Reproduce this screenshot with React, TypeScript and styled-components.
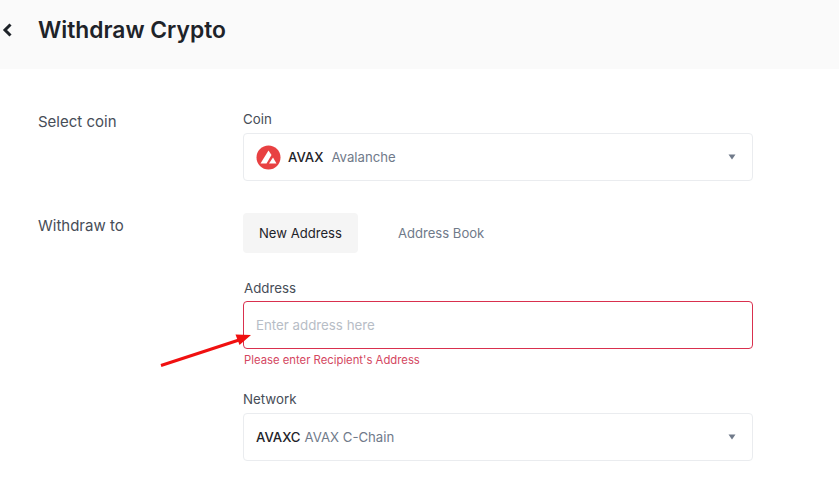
import styled, { createGlobalStyle } from "styled-components";

const GlobalStyle = createGlobalStyle`
  html, body {
    margin: 0;
    padding: 0;
    background: #fff;
    font-family: "Inter", "Liberation Sans", sans-serif;
    overflow: hidden;
  }
`;

const Page = styled.div`
  position: relative;
  width: 839px;
  height: 482px;
  overflow: hidden;
`;

const Header = styled.header`
  display: flex;
  align-items: center;
  height: 69px;
  padding-bottom: 10px;
  box-sizing: border-box;
  background: #fafafa;
`;

const BackButton = styled.button`
  display: flex;
  width: 38px;
  padding: 0 0 0 1px;
  border: 0;
  background: none;
`;

const Title = styled.h1`
  margin: 0;
  font-size: 22.8px;
  line-height: 30px;
  font-weight: 600;
  color: #1e2329;
`;

const Main = styled.main`
  display: flex;
  flex-direction: column;
  gap: 32px;
  padding: 41px 0 0 38px;
`;

const Section = styled.section`
  display: grid;
  grid-template-columns: 205px 510px;
`;

const SectionLabel = styled.div<{ $top: number }>`
  padding-top: ${(p) => p.$top}px;
  font-size: 15px;
  line-height: 22px;
  color: #474d57;
`;

const Field = styled.div`
  display: flex;
  flex-direction: column;
`;

const FieldLabel = styled.label`
  margin-bottom: 4px;
  font-size: 13.3px;
  line-height: 19px;
  color: #474d57;
`;

const Select = styled.div`
  display: flex;
  align-items: center;
  height: 48px;
  padding: 0 16px 0 12px;
  box-sizing: border-box;
  border: 1px solid #eaecef;
  border-radius: 4px;
  font-size: 13.2px;
`;

const CoinLogo = styled.svg`
  margin-right: 7px;
`;

const Symbol = styled.span`
  margin-right: 8px;
  font-weight: 500;
  color: #1e2329;
`;

const NetworkSymbol = styled(Symbol)`
  margin-right: 4px;
`;

const Muted = styled.span`
  color: #707a8a;
`;

const Caret = styled.svg`
  margin-left: auto;
`;

const Tabs = styled.div`
  display: flex;
  align-items: center;
  gap: 40px;
  margin-bottom: 26px;
`;

const Tab = styled.div<{ $active?: boolean }>`
  display: flex;
  align-items: center;
  height: 40px;
  padding: ${(p) => (p.$active ? "0 16px" : "0")};
  border-radius: 4px;
  background: ${(p) => (p.$active ? "#f5f5f5" : "transparent")};
  font-size: 13.1px;
  color: ${(p) => (p.$active ? "#1e2329" : "#707a8a")};
`;

const AddressLabel = styled(FieldLabel)`
  margin-left: 1px;
  margin-bottom: 3px;
`;

const AddressInput = styled.input`
  height: 48px;
  padding: 0 12px;
  box-sizing: border-box;
  border: 1px solid #d9304e;
  border-radius: 4px;
  outline: none;
  font: inherit;
  font-size: 13.3px;

  &::placeholder {
    color: #b7bdc6;
    opacity: 1;
  }
`;

const ErrorText = styled.div`
  margin: 3px 0 22px 1px;
  font-size: 11.3px;
  line-height: 16px;
  color: #d4475f;
`;

const Arrow = styled.svg`
  position: absolute;
  left: 155px;
  top: 328px;
`;

function ChevronDown() {
  return (
    <Caret width="8" height="6" viewBox="0 0 8 6">
      <path d="M0.5 0.5h7L4 5.5z" fill="#707a8a" />
    </Caret>
  );
}

export default function App() {
  return (
    <Page>
      <GlobalStyle />
      <Header>
        <BackButton aria-label="Back">
          <svg width="12" height="16" viewBox="0 0 12 16">
            <path d="M9.5 2.5 4 8l5.5 5.5" fill="none" stroke="#1e2329" strokeWidth="3" />
          </svg>
        </BackButton>
        <Title>Withdraw Crypto</Title>
      </Header>
      <Main>
        <Section>
          <SectionLabel $top={1}>Select coin</SectionLabel>
          <Field>
            <FieldLabel>Coin</FieldLabel>
            <Select>
              <CoinLogo width="25" height="25" viewBox="0 0 25 25">
                <circle cx="12.5" cy="12.5" r="12" fill="#e84142" />
                <path d="M12.5 5.5 15.5 10 10.5 18.5H4.5z" fill="#fff" />
                <path d="M17 12.5 13 18.5H20.5z" fill="#fff" />
              </CoinLogo>
              <Symbol>AVAX</Symbol>
              <Muted>Avalanche</Muted>
              <ChevronDown />
            </Select>
          </Field>
        </Section>
        <Section>
          <SectionLabel $top={2}>Withdraw to</SectionLabel>
          <Field>
            <Tabs>
              <Tab $active>New Address</Tab>
              <Tab>Address Book</Tab>
            </Tabs>
            <AddressLabel>Address</AddressLabel>
            <AddressInput placeholder="Enter address here" />
            <ErrorText>Please enter Recipient's Address</ErrorText>
            <FieldLabel>Network</FieldLabel>
            <Select>
              <NetworkSymbol>AVAXC</NetworkSymbol>
              <Muted>AVAX C-Chain</Muted>
              <ChevronDown />
            </Select>
          </Field>
        </Section>
      </Main>
      <Arrow width="100" height="44" viewBox="0 0 100 44">
        <path d="M6 37.5 84 12" stroke="#f01010" strokeWidth="3" />
        <path d="M96 7 80.5 6.5 84.5 17z" fill="#f01010" />
      </Arrow>
    </Page>
  );
}
